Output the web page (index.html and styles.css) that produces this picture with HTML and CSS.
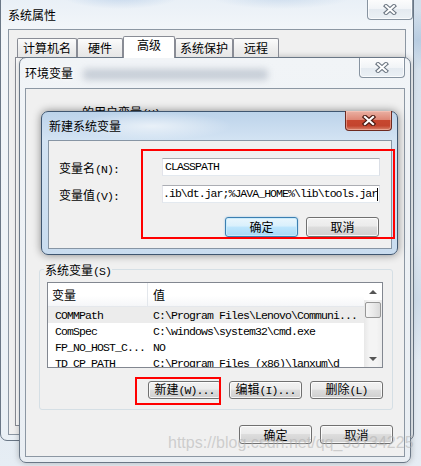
FILE: index.html
```html
<!DOCTYPE html>
<html lang="zh-CN">
<head>
<meta charset="utf-8">
<title>系统属性 - 环境变量</title>
<link rel="stylesheet" href="styles.css">
</head>
<body>
<div class="desk">

  <section class="win outer">
    <header class="tbar"><span class="ttl">系统属性</span></header>
    <div class="xbtn inactive xo">
      <svg width="14" height="11" viewBox="0 0 14 11"><path d="M3 2 L11 9 M11 2 L3 9" stroke="#6c7682" stroke-width="4.2" stroke-linecap="square"/><path d="M3 2 L11 9 M11 2 L3 9" stroke="#ffffff" stroke-width="2" stroke-linecap="square"/></svg>
    </div>
    <div class="client oclient">
      <nav class="tabs">
        <span class="tab t1">计算机名</span>
        <span class="tab t2">硬件</span>
        <span class="tab sel">高级</span>
        <span class="tab t4">系统保护</span>
        <span class="tab t5">远程</span>
      </nav>
      <div class="tabpanel"></div>
    </div>
  </section>

  <section class="win env">
    <header class="tbar"><span class="ttl glow">环境变量</span><span class="blur"></span></header>
    <div class="xbtn inactive xe">
      <svg width="14" height="11" viewBox="0 0 14 11"><path d="M3 2 L11 9 M11 2 L3 9" stroke="#6c7682" stroke-width="4.2" stroke-linecap="square"/><path d="M3 2 L11 9 M11 2 L3 9" stroke="#ffffff" stroke-width="2" stroke-linecap="square"/></svg>
    </div>
    <div class="client eclient">
      <div class="uvar">的用户变量<span class="m">(U)</span></div>
      <fieldset class="grp">
        <legend>系统变量<span class="m">(S)</span></legend>
        <div class="list">
          <div class="lv">
            <div class="lhead"><span class="c1">变量</span><span class="c2">值</span></div>
            <div class="row hl"><span class="c1 m">COMMPath</span><span class="c2 m">C:\Program Files\Lenovo\Communi...</span></div>
            <div class="row"><span class="c1 m">ComSpec</span><span class="c2 m">C:\windows\system32\cmd.exe</span></div>
            <div class="row"><span class="c1 m">FP_NO_HOST_C...</span><span class="c2 m">NO</span></div>
            <div class="row"><span class="c1 m">TD_CP_PATH</span><span class="c2 m">C:\Program Files (x86)\lanxum\d</span></div>
          </div>
          <div class="sb">
            <div class="arr"><span class="up"></span></div>
            <div class="thumb"></div>
            <div class="track"></div>
            <div class="arr"><span class="down"></span></div>
          </div>
        </div>
        <div class="btnrow">
          <button class="btn">新建<span class="m">(W)...</span></button>
          <button class="btn">编辑<span class="m">(I)...</span></button>
          <button class="btn">删除<span class="m">(L)</span></button>
        </div>
      </fieldset>
      <div class="btnrow bottom">
        <button class="btn">确定</button>
        <button class="btn">取消</button>
      </div>
    </div>
  </section>

  <section class="win dlg">
    <header class="tbar"><span class="ttl">新建系统变量</span></header>
    <div class="xbtn active xd">
      <svg width="14" height="11" viewBox="0 0 14 11"><path d="M3 2 L11 9 M11 2 L3 9" stroke="#4a1a12" stroke-width="4.4" stroke-linecap="square"/><path d="M3 2 L11 9 M11 2 L3 9" stroke="#ffffff" stroke-width="2.2" stroke-linecap="square"/></svg>
    </div>
    <div class="client dclient">
      <div class="frow">
        <label class="lbl">变量名<span class="m">(N):</span></label>
        <div class="inp"><span class="m">CLASSPATH</span></div>
      </div>
      <div class="frow r2">
        <label class="lbl">变量值<span class="m">(V):</span></label>
        <div class="inp scrolled"><span class="m tight">.ib\dt.jar;%JAVA_HOME%\lib\tools.jar</span><span class="caret"></span></div>
      </div>
      <div class="btnrow dbtns">
        <button class="btn def">确定</button>
        <button class="btn">取消</button>
      </div>
    </div>
  </section>

  <div class="redbox rb1"></div>
  <div class="redbox rb2"></div>
  <div class="wm">https://blog.csdn.net/qq_33734225</div>
</div>
</body>
</html>
```

FILE: styles.css
```css
* { box-sizing: border-box; }
html, body { margin: 0; padding: 0; }
body {
  width: 421px;
  height: 466px;
  overflow: hidden;
  font-family: "Noto Sans CJK SC", "Noto Sans", sans-serif;
  font-size: 12px;
  color: #000;
  background: #dfe8f1;
}
.desk {
  position: relative;
  width: 421px;
  height: 466px;
  overflow: hidden;
  background:
    radial-gradient(ellipse 40px 30px at 418px 40px, rgba(170,195,220,0.7), transparent),
    radial-gradient(ellipse 30px 60px at 418px 300px, rgba(200,215,230,0.8), transparent),
    linear-gradient(#d3dfeb, #e6edf4);
}
.m {
  font-family: "Liberation Mono", "DejaVu Sans Mono", monospace;
  font-size: 11.5px;
  letter-spacing: -0.9px;
}
.m.tight { letter-spacing: -0.95px; }

/* windows */
.win {
  position: absolute;
  display: flex;
  flex-direction: column;
  border: 1px solid #6a7786;
  border-radius: 7px;
  padding: 0 5px 5px;
}
.tbar {
  flex: none;
  height: 30px;
  display: flex;
  align-items: center;
  line-height: 14px;
  white-space: nowrap;
}
.ttl { font-size: 12px; }
.glow { text-shadow: 0 0 6px #fff, 0 0 3px #fff; }
.client {
  flex: 1;
  min-height: 0;
  border: 1px solid #8c97a3;
  background: #f0f0f0;
}

/* outer window */
.outer {
  left: 0;
  top: -10px;
  width: 414px;
  height: 451px;
  padding: 0 7px 5px 7px;
  background:
    radial-gradient(ellipse 60px 14px at 120px 4px, rgba(160,190,225,0.55), transparent),
    radial-gradient(ellipse 70px 12px at 280px 6px, rgba(175,200,228,0.5), transparent),
    linear-gradient(#e6eef6, #f3f6f9 40px, #eaf0f5);
}
.outer .tbar {
  height: 38px;
  align-items: flex-start;
  padding-top: 17px;
}
.oclient { background: #f0f0f0; }
.tabs {
  display: flex;
  align-items: flex-end;
  height: 21px;
  margin: 6px 0 0 8px;
  position: relative;
  z-index: 1;
}
.tab {
  height: 19px;
  border: 1px solid #898c95;
  border-bottom: none;
  border-radius: 2px 2px 0 0;
  background: linear-gradient(#fbfbfb, #efefef 50%, #e6e6e6);
  text-align: center;
  line-height: 18px;
  flex: none;
}
.t1 { width: 60px; }
.t2 { width: 46px; }
.t4 { width: 58px; }
.t5 { width: 46px; }
.tab.sel {
  width: 52px;
  height: 22px;
  margin-bottom: -1px;
  background: #fff;
  line-height: 16px;
}
.tabpanel {
  margin: 0 6px 0 6px;
  height: 369px;
  border: 1px solid #898c95;
  background: #fff;
}

/* environment window */
.env {
  left: 19px;
  top: 57px;
  width: 392px;
  height: 406px;
  background: linear-gradient(#f1f4f7, #e9eef3);
  box-shadow: 0 0 6px rgba(0,0,0,0.25);
}
.blur {
  width: 185px;
  height: 11px;
  margin-left: 10px;
  margin-top: 3px;
  background: rgba(110,125,145,0.32);
  filter: blur(3.5px);
  border-radius: 4px;
}
.eclient { display: flex; flex-direction: column; }
.uvar {
  margin: 16px 0 0 56px;
  height: 13px;
  line-height: 13px;
}
.grp {
  margin: 145px 11px 0 13px;
  padding: 0 0 10px 0;
  border: 1px solid #d5dfe5;
  border-radius: 3px;
  min-width: 0;
}
.grp legend {
  margin-left: 4px;
  padding: 0 1px;
  line-height: 13px;
  height: 13px;
}
.list {
  margin: 6px 0 0 7px;
  width: 336px;
  height: 86px;
  border: 1px solid #828790;
  background: #fff;
  display: flex;
}
.lv { flex: 1; overflow: hidden; min-width: 0; }
.lhead {
  height: 24px;
  display: flex;
  align-items: center;
  background: linear-gradient(#fff, #fff 55%, #f5f6f8);
  border-bottom: 1px solid #e5e8ec;
}
.lhead .c1 {
  width: 100px;
  padding-left: 4px;
  border-right: 1px solid #e3e7ec;
  height: 23px;
  line-height: 23px;
}
.lhead .c2 { padding-left: 5px; }
.row {
  height: 16px;
  line-height: 17px;
  display: flex;
  white-space: nowrap;
}
.row.hl { background: #ececec; }
.row .c1 { width: 100px; padding-left: 7px; flex: none; }
.row .c2 { padding-left: 5px; }
.sb {
  width: 18px;
  flex: none;
  display: flex;
  flex-direction: column;
  background: linear-gradient(to right, #e8e8e8, #f4f4f4 30%, #f4f4f4 70%, #ececec);
}
.arr {
  height: 17px;
  display: flex;
  align-items: center;
  justify-content: center;
  background: #fff;
}
.arr:last-child { background: transparent; }
.up, .down {
  width: 0;
  height: 0;
  border-left: 4px solid transparent;
  border-right: 4px solid transparent;
}
.up { border-bottom: 4px solid #555; }
.down { border-top: 4px solid #555; }
.thumb {
  height: 16px;
  margin: 2px 1px 0 1px;
  border: 1px solid #979797;
  border-radius: 2px;
  background: linear-gradient(to right, #f6f6f6, #eaeaea 50%, #dadada);
}
.track { flex: 1; }
.btnrow {
  display: flex;
  justify-content: flex-end;
  gap: 8px;
}
.grp .btnrow { margin: 13px 0 0 7px; width: 336px; }
.btnrow.bottom { margin: 15px 11px 0 0; }
.btn {
  width: 73px;
  height: 18px;
  padding: 0;
  border: 1px solid #707070;
  border-radius: 3px;
  background: linear-gradient(#f2f2f2, #ebebeb 45%, #dddddd 50%, #cfcfcf);
  box-shadow: inset 0 0 0 1px rgba(255,255,255,0.8);
  font-family: "Noto Sans CJK SC", sans-serif;
  font-size: 12px;
  line-height: 14px;
  color: #000;
}
.btnrow.bottom .btn { height: 19px; }

/* new variable dialog */
.dlg {
  left: 41px;
  top: 111px;
  width: 357px;
  height: 144px;
  padding: 0 5px 5px 6px;
  border-color: #3f5670;
  background:
    radial-gradient(ellipse 80px 14px at 110px 14px, rgba(255,255,255,0.6), transparent),
    linear-gradient(#bcd3ea, #d3e3f3 28px, #c9dcef);
  box-shadow: 0 0 9px rgba(0,0,0,0.45);
}
.dlg .tbar { height: 28px; padding-left: 1px; }
.dclient { border-color: #8795a4; }
.frow {
  display: flex;
  align-items: center;
  height: 18px;
  margin: 17px 0 0 10px;
}
.frow.r2 { margin-top: 9px; }
.lbl { width: 103px; flex: none; }
.inp {
  width: 218px;
  height: 18px;
  border: 1px solid;
  border-color: #abadb3 #dbdfe6 #e3e9ef #e2e3ea;
  background: #fff;
  padding-left: 2px;
  line-height: 16px;
  white-space: nowrap;
  overflow: hidden;
  display: flex;
  align-items: center;
}
.inp.scrolled { padding-left: 0; }
.caret {
  display: inline-block;
  width: 1px;
  height: 13px;
  background: #000;
  flex: none;
}
.dbtns { margin: 14px 12px 0 0; }
.dbtns .btn { height: 20px; }
.btn.def {
  border-color: #3c7fb1;
  background: linear-gradient(#eaf6fd, #d9f0fc 45%, #bee6fd 50%, #a7d9f5);
  box-shadow: inset 0 0 0 1px rgba(200,235,252,0.9), 0 0 2px rgba(80,160,220,0.6);
}

/* caption buttons */
.xbtn {
  position: absolute;
  display: flex;
  align-items: center;
  justify-content: center;
  border: 1px solid #8793a0;
  border-top: none;
  border-radius: 0 0 4px 4px;
}
.xbtn.inactive {
  background: linear-gradient(#fdfdfd, #f1f4f7 50%, #e4eaf0 52%, #ebf0f5);
  box-shadow: inset 0 0 0 1px rgba(255,255,255,0.7);
}
.xbtn.active {
  border-color: #6e2a20;
  background: linear-gradient(#eab1a4, #de8877 45%, #c7462f 50%, #c3442e 78%, #d9836c);
  box-shadow: inset 0 0 0 1px rgba(255,210,200,0.45);
}
.xo { top: 8px; right: 0; width: 46px; height: 21px; }
.xe { top: 0; right: 5px; width: 46px; height: 20px; }
.xd { top: -1px; right: 5px; width: 47px; height: 20px; }

/* annotations */
.redbox {
  position: absolute;
  border: 2px solid #ff0000;
}
.rb1 { left: 141px; top: 149px; width: 254px; height: 90px; }
.rb2 { left: 135px; top: 377px; width: 86px; height: 28px; }
.wm {
  position: absolute;
  left: 168px;
  top: 434px;
  font-family: "Liberation Sans", Arial, sans-serif;
  font-size: 16px;
  line-height: 18px;
  color: rgba(175,175,175,0.55);
  white-space: nowrap;
  pointer-events: none;
}
```
